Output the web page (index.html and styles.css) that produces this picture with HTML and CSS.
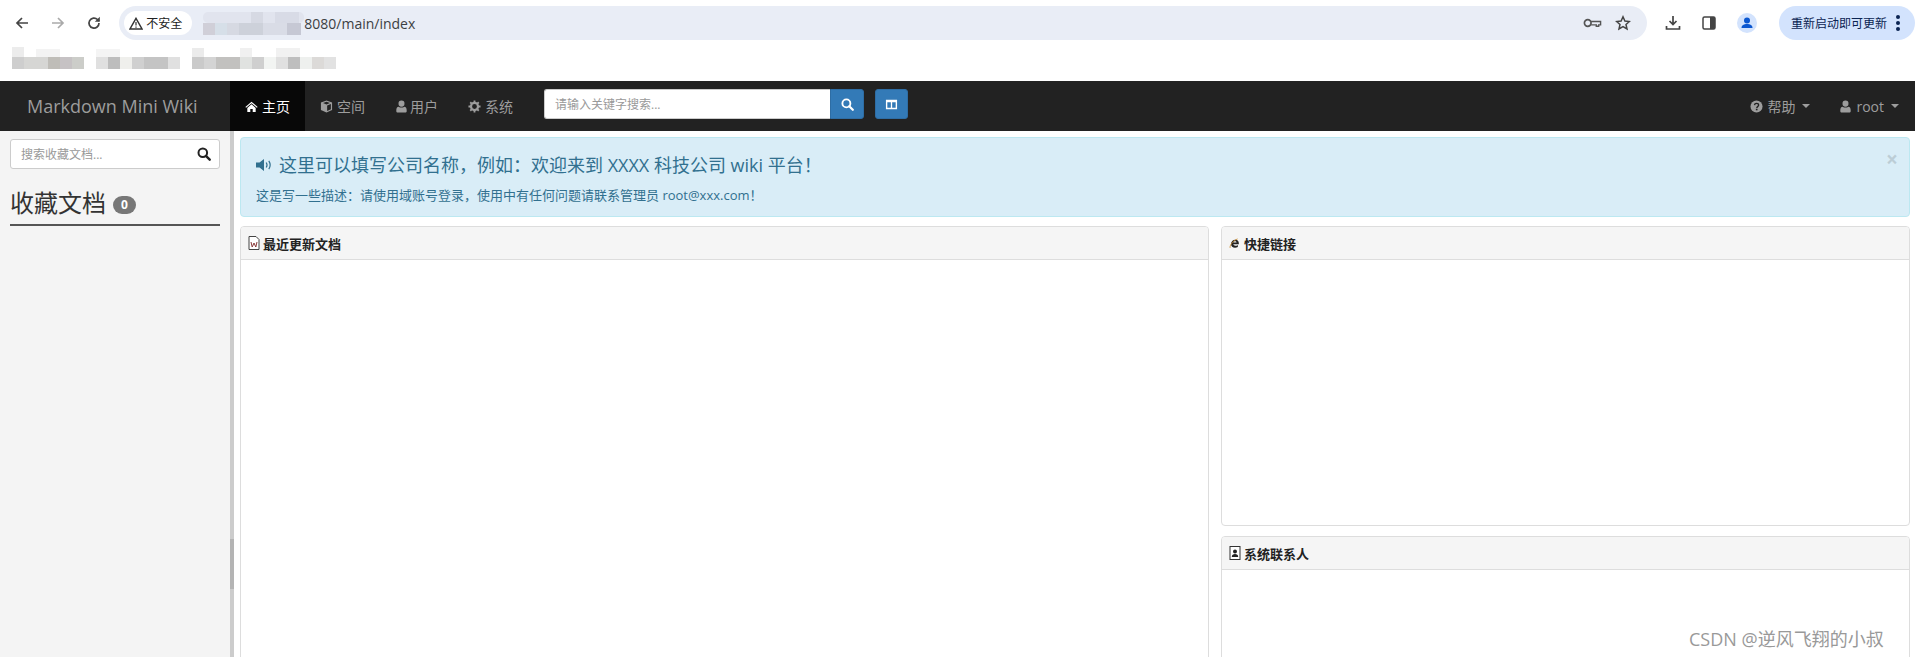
FILE: index.html
```html
<!DOCTYPE html>
<html lang="en">

<head>
  <meta charset="UTF-8">
  <title>Markdown Mini Wiki</title>
  <link rel="stylesheet" href="styles.css">
</head>

<body>
  <svg class="defs" width="0" height="0">
    <symbol id="i-user" viewBox="0 0 12 14">
      <path d="M6 0.5a3.2 3.2 0 0 1 3.2 3.4A3.2 3.2 0 0 1 6 7.3 3.2 3.2 0 0 1 2.8 3.9 3.2 3.2 0 0 1 6 0.5zM3 7.2c.8.6 1.8 1 3 1s2.2-.4 3-1c1.800 .2 2.600 1.500 2.600 4v1c0 .9-.7 1.300-1.500 1.300H1.900C1.100 13.500 .4 13.100 .4 12.200v-1c0-2.500 .8-3.800 2.600-4z" fill="currentColor"/>
    </symbol>
    <symbol id="i-search" viewBox="0 0 14 14">
      <circle cx="5.800" cy="5.800" r="4.300" fill="none" stroke="currentColor" stroke-width="2"/>
      <path d="M8.900 8.900L12.700 12.700" stroke="currentColor" stroke-width="2.400" stroke-linecap="round"/>
    </symbol>
  </svg>

  <header class="browser">
    <div class="toolbar">
      <div class="tool-nav">
        <svg class="tool-icon" viewBox="0 0 16 16"><path d="M14 8H3M8 3L3 8l5 5" fill="none" stroke="#444" stroke-width="1.700"/></svg>
        <svg class="tool-icon" viewBox="0 0 16 16"><path d="M2 8h11M8 3l5 5-5 5" fill="none" stroke="#aaa" stroke-width="1.700"/></svg>
        <svg class="tool-icon" viewBox="0 0 16 16"><path d="M13 8a5 5 0 1 1-1.500-3.500L13 6" fill="none" stroke="#444" stroke-width="1.700"/><path d="M13.800 1.800v5h-5z" fill="#444"/></svg>
      </div>
      <div class="omnibox">
        <div class="chip">
          <svg class="warn" viewBox="0 0 14 13"><path d="M7 1.300L13 12H1z" fill="none" stroke="#333" stroke-width="1.400"/><path d="M7 5v3.600M7 9.500v1.200" stroke="#333" stroke-width="1.200"/></svg>
          <span>不安全</span>
        </div>
        <svg class="mosaic-url" width="101" height="24" viewBox="0 0 101 24">
          <rect x="0" y="1" width="101" height="11" rx="5" fill="#e1e4ee"/>
          <rect x="48" y="1" width="12" height="11" fill="#d6d9e3"/>
          <rect x="72" y="1" width="24" height="11" fill="#d8dbe6"/>
          <rect x="0" y="12" width="12" height="12" fill="#d0cfd8"/>
          <rect x="12" y="12" width="12" height="12" fill="#d6dfe8"/>
          <rect x="24" y="12" width="12" height="12" fill="#d6d9e2"/>
          <rect x="36" y="12" width="24" height="12" fill="#cdd1da"/>
          <rect x="60" y="12" width="24" height="12" fill="#d9dce6"/>
          <rect x="84" y="12" width="14" height="12" fill="#c6c8d4"/>
        </svg>
        <span class="url">8080/main/index</span>
        <div class="omni-end">
          <svg class="omni-icon key" viewBox="0 0 20 12"><circle cx="5" cy="6" r="3.500" fill="none" stroke="#555" stroke-width="1.800"/><path d="M8.500 4.500h10v3.500h-2v1.500h-2.500V8h-5.500" fill="none" stroke="#555" stroke-width="1.500"/></svg>
          <svg class="omni-icon" viewBox="0 0 16 16"><path d="M8 1.800l1.900 4.200 4.500.5-3.400 3 1 4.500L8 11.700 4 14l1-4.500-3.400-3 4.500-.5z" fill="none" stroke="#444" stroke-width="1.500"/></svg>
        </div>
      </div>
      <div class="tool-end">
        <svg class="tool-icon" viewBox="0 0 16 16"><path d="M8 1v8M4.500 6L8 9.500 11.500 6" fill="none" stroke="#444" stroke-width="1.700"/><path d="M1.500 11v3h13v-3" fill="none" stroke="#444" stroke-width="1.700"/></svg>
        <svg class="tool-icon" viewBox="0 0 16 16"><rect x="2" y="2" width="12" height="12" rx="1.500" fill="#fff" stroke="#444" stroke-width="1.500"/><rect x="9" y="2" width="5" height="12" fill="#444"/></svg>
        <svg class="avatar" viewBox="0 0 20 20"><circle cx="10" cy="10" r="10" fill="#d3e3fd"/><circle cx="10" cy="7.500" r="3" fill="#0b57d0"/><path d="M4.500 15c0-3 2.500-4 5.500-4s5.500 1 5.500 4z" fill="#0b57d0"/></svg>
        <div class="restart">
          <span>重新启动即可更新</span>
          <i class="dots"></i>
        </div>
      </div>
    </div>
    <div class="bookmarks">
      <svg width="336" height="22" viewBox="0 0 336 22">
        <rect x="0" y="0" width="12" height="10" fill="#ececec"/>
        <rect x="24" y="2" width="24" height="8" fill="#f3f3f3"/>
        <rect x="84" y="2" width="24" height="8" fill="#f4f4f4"/>
        <rect x="180" y="1" width="12" height="9" fill="#ebebeb"/>
        <rect x="228" y="1" width="12" height="9" fill="#f0f0f0"/>
        <rect x="264" y="1" width="24" height="9" fill="#f1f1f1"/>
        <rect x="0" y="10" width="12" height="12" fill="#cecece"/>
        <rect x="12" y="10" width="24" height="12" fill="#d6d6d4"/>
        <rect x="36" y="10" width="12" height="12" fill="#bfbdb8"/>
        <rect x="48" y="10" width="12" height="12" fill="#c6c2c4"/>
        <rect x="60" y="10" width="12" height="12" fill="#cccdc9"/>
        <rect x="84" y="10" width="12" height="12" fill="#e0e0e0"/>
        <rect x="96" y="10" width="12" height="12" fill="#bdbdbd"/>
        <rect x="108" y="10" width="12" height="12" fill="#efefec"/>
        <rect x="120" y="10" width="12" height="12" fill="#d0d0d0"/>
        <rect x="132" y="10" width="24" height="12" fill="#c4c4c4"/>
        <rect x="156" y="10" width="12" height="12" fill="#e0e0e0"/>
        <rect x="180" y="10" width="12" height="12" fill="#cacaca"/>
        <rect x="192" y="10" width="12" height="12" fill="#d4d4d4"/>
        <rect x="204" y="10" width="24" height="12" fill="#c2c1bf"/>
        <rect x="228" y="10" width="12" height="12" fill="#e0e2e0"/>
        <rect x="240" y="10" width="12" height="12" fill="#cfcfcf"/>
        <rect x="252" y="10" width="12" height="12" fill="#f2f4f2"/>
        <rect x="264" y="10" width="12" height="12" fill="#e0e0e0"/>
        <rect x="276" y="10" width="12" height="12" fill="#bebebe"/>
        <rect x="288" y="10" width="12" height="12" fill="#eef0ee"/>
        <rect x="300" y="10" width="12" height="12" fill="#dcdad8"/>
        <rect x="312" y="10" width="12" height="12" fill="#e2e2e2"/>
      </svg>
    </div>
  </header>

  <nav class="navbar">
    <a class="brand">Markdown Mini Wiki</a>
    <ul class="nav">
      <li class="nav-item active">
        <svg class="nav-icon" viewBox="0 0 14 12"><path d="M7 .8L13.600 6.500l-.8.9L7 2.400 1.200 7.400l-.8-.9zM2.500 7.500L7 3.600l4.500 3.900V12H8.300V8.800H5.700V12H2.500z" fill="currentColor"/></svg>
        <span>主页</span>
      </li>
      <li class="nav-item">
        <svg class="nav-icon" viewBox="0 0 14 14"><path d="M7 .5l6 2.300v8L7 13.500 1 10.800v-8zM7 2L3.300 3.300 7 4.800l3.700-1.500zM7.700 6v5.800l4-1.900V4.400z" fill="currentColor" fill-rule="evenodd"/></svg>
        <span>空间</span>
      </li>
      <li class="nav-item user-item">
        <svg class="nav-icon"><use href="#i-user"/></svg>
        <span>用户</span>
      </li>
      <li class="nav-item">
        <svg class="nav-icon" viewBox="0 0 14 14"><path d="M7 4.600a2.400 2.400 0 1 0 0 4.800 2.400 2.400 0 0 0 0-4.800z" fill="none"/><circle cx="7" cy="7" r="3.800" fill="none" stroke="currentColor" stroke-width="2.400"/><path d="M7 .5v2.500M7 11v2.500M.5 7H3M11 7h2.500M2.400 2.400l1.800 1.800M9.800 9.800l1.800 1.800M2.400 11.600l1.800-1.800M9.800 4.200l1.800-1.800" stroke="currentColor" stroke-width="2"/></svg>
        <span>系统</span>
      </li>
    </ul>
    <form class="nav-search">
      <input class="nav-input" type="text" placeholder="请输入关键字搜索...">
      <button class="btn btn-search" type="button"><svg class="btn-icon"><use href="#i-search"/></svg></button>
    </form>
    <button class="btn btn-columns" type="button">
      <svg class="btn-icon" viewBox="0 0 14 14"><path d="M1 2h12v10H1zM2.500 4.500V10.500H6.300V4.500zM7.700 4.500V10.500H11.500V4.500z" fill="currentColor" fill-rule="evenodd"/></svg>
    </button>
    <ul class="nav nav-right">
      <li class="nav-item">
        <svg class="nav-icon" viewBox="0 0 14 14"><circle cx="7" cy="7" r="6.500" fill="currentColor"/><path d="M4.800 5.400C5 4.200 5.900 3.600 7 3.600c1.300 0 2.300.8 2.300 1.900 0 1.700-2 1.500-2 3" fill="none" stroke="#222" stroke-width="1.500"/><rect x="6.300" y="9.400" width="1.800" height="1.700" fill="#222"/></svg>
        <span>帮助</span>
        <i class="caret"></i>
      </li>
      <li class="nav-item">
        <svg class="nav-icon"><use href="#i-user"/></svg>
        <span>root</span>
        <i class="caret"></i>
      </li>
    </ul>
  </nav>

  <div class="app">
    <aside class="sidebar">
      <div class="side-search">
        <input class="side-input" type="text" placeholder="搜索收藏文档...">
        <svg class="side-search-icon"><use href="#i-search"/></svg>
      </div>
      <h2 class="side-title">收藏文档 <span class="badge">0</span></h2>
    </aside>
    <div class="splitter"><div class="splitter-handle"></div></div>

    <main class="content">
      <div class="alert">
        <span class="alert-close">×</span>
        <h4 class="alert-title">
          <svg class="alert-icon" viewBox="0 0 18 14"><path d="M0 4.500h3.500L8 1v12L3.500 9.500H0z" fill="currentColor"/><path d="M10.200 4.500c1 1.500 1 3.500 0 5M12.800 2.800c1.700 2.600 1.700 5.800 0 8.400" fill="none" stroke="currentColor" stroke-width="1.200"/></svg>
          这里可以填写公司名称，例如：欢迎来到 XXXX 科技公司 wiki 平台！
        </h4>
        <p class="alert-text">这是写一些描述：请使用域账号登录，使用中有任何问题请联系管理员 root@xxx.com！</p>
      </div>

      <div class="panels">
        <section class="panel panel-recent">
          <div class="panel-head">
            <svg class="panel-icon" viewBox="0 0 12 14"><path d="M1 .5h7l3 3v10H1z" fill="#fff" stroke="#444"/><path d="M3 6l1.200 5L6 7l1.800 4L9 6" fill="none" stroke="#8a3a3a" stroke-width="1"/></svg>
            最近更新文档
          </div>
        </section>
        <div class="panel-col">
          <section class="panel panel-links">
            <div class="panel-head">
              <svg class="panel-icon" viewBox="0 0 14 14"><path d="M11.500 8.600H5c.2 1.700 2.800 2.400 5.300.7v2.400c-3.800 1.700-8 .4-8-3.500 0-3.300 3-5.700 6-5 2.300.5 3.500 2.600 3.200 5.400zM5 6.400h3.800C8.700 4.400 5.400 4.300 5 6.400z" fill="#222" fill-rule="evenodd"/><path d="M1.500 12.800C.3 11.500 3 5 10 2.200" fill="none" stroke="#c98a2e" stroke-width="1"/></svg>
              快捷链接
            </div>
          </section>
          <section class="panel panel-contact">
            <div class="panel-head">
              <svg class="panel-icon" viewBox="0 0 12 14"><rect x="1" y=".5" width="10" height="13" fill="#fff" stroke="#333"/><circle cx="6" cy="5.500" r="2" fill="#222"/><path d="M2.800 11c0-2.200 1.400-3 3.200-3s3.200.8 3.200 3z" fill="#222"/></svg>
              系统联系人
            </div>
          </section>
        </div>
      </div>
    </main>
  </div>

  <div class="watermark">CSDN @逆风飞翔的小叔</div>
</body>

</html>
```

FILE: styles.css
```css
html {
  font-family: "Open Sans", "Noto Sans CJK SC", sans-serif;
}

* {
  box-sizing: border-box;
}

body {
  width: 1915px;
  height: 657px;
  margin: 0;
  overflow: hidden;
  position: relative;
  background-color: #fff;
  color: #333;
  font-size: 14px;
}

.defs {
  position: absolute;
}

/* browser bar */
.browser {
  height: 81px;
  background-color: #fff;
}

.toolbar {
  height: 46px;
  padding-top: 6px;
  display: flex;
  align-items: flex-start;
}

.tool-nav {
  width: 120px;
  height: 34px;
  padding-left: 14px;
  display: flex;
  align-items: center;
  gap: 20px;
}

.tool-icon {
  width: 16px;
  height: 16px;
}

.omnibox {
  width: 1538px;
  height: 34px;
  padding-left: 5px;
  display: flex;
  align-items: center;
  background-color: #e9edf6;
  border-radius: 17px;
}

.chip {
  width: 68px;
  height: 24px;
  display: flex;
  align-items: center;
  gap: 3px;
  padding-left: 5px;
  background-color: #fff;
  border-radius: 12px;
  font-size: 12px;
  color: #222;
}

.warn {
  width: 14px;
  height: 13px;
}

.mosaic-url {
  margin-left: 11px;
}

.url {
  font-size: 14px;
  color: #3c4043;
}

.omni-end {
  margin-left: auto;
  padding-right: 16px;
  display: flex;
  align-items: center;
  gap: 13px;
}

.omni-icon {
  width: 16px;
  height: 16px;
}

.key {
  width: 19px;
  height: 12px;
}

.tool-end {
  flex: 1;
  height: 34px;
  padding-left: 18px;
  display: flex;
  align-items: center;
  gap: 20px;
}

.avatar {
  width: 20px;
  height: 20px;
}

.restart {
  width: 136px;
  height: 34px;
  margin-left: 2px;
  padding-left: 12px;
  display: flex;
  align-items: center;
  background-color: #d3e3fd;
  border-radius: 17px;
  font-size: 12px;
  color: #0b2452;
}

.dots {
  width: 4px;
  height: 4px;
  margin-left: 9px;
  border-radius: 50%;
  background-color: #0b2452;
  box-shadow: 0 -6px 0 #0b2452, 0 6px 0 #0b2452;
}

.bookmarks {
  height: 35px;
  padding-left: 12px;
  padding-top: 1px;
}

/* top navbar */
.navbar {
  height: 50px;
  display: flex;
  align-items: stretch;
  background-color: #222;
  color: #9d9d9d;
}

.brand {
  width: 230px;
  padding-left: 27px;
  line-height: 50px;
  font-size: 18px;
  color: #9d9d9d;
}

.nav {
  display: flex;
  margin: 0;
  padding: 0;
  list-style: none;
}

.nav-item {
  display: flex;
  align-items: center;
  gap: 4px;
  padding: 0 15px;
  font-size: 14px;
}

.nav-item.active {
  background-color: #080808;
  color: #fff;
}

.nav-icon {
  width: 13px;
  height: 13px;
}

.user-item {
  gap: 2px;
}

.nav-search {
  display: flex;
  margin: 8px 0 0 16px;
  height: 30px;
}

.nav-input {
  width: 286px;
  height: 30px;
  padding: 0 10px;
  border: 1px solid #ccc;
  border-right: 0;
  border-radius: 3px 0 0 3px;
  font: 12px "Open Sans", "Noto Sans CJK SC", sans-serif;
  outline: 0;
}

.nav-input::placeholder,
.side-input::placeholder {
  color: #999;
}

.btn {
  height: 30px;
  padding: 0;
  display: flex;
  align-items: center;
  justify-content: center;
  border: 1px solid #2e6da4;
  background-color: #337ab7;
  color: #fff;
}

.btn-search {
  width: 34px;
  border-radius: 0 3px 3px 0;
}

.btn-columns {
  width: 33px;
  margin: 8px 0 0 11px;
  border-radius: 3px;
}

.btn-icon {
  width: 13px;
  height: 13px;
}

.nav-right {
  margin-left: auto;
  padding-right: 1px;
}

.nav-right .nav-item {
  padding: 0 15px 0 14px;
}

.caret {
  width: 0;
  height: 0;
  margin-left: 3px;
  border-top: 4px solid currentColor;
  border-left: 4px solid transparent;
  border-right: 4px solid transparent;
}

/* page body */
.app {
  height: 526px;
  display: flex;
}

.sidebar {
  width: 230px;
  padding: 8px 10px 0;
  background-color: #f4f4f4;
}

.side-search {
  position: relative;
  height: 30px;
}

.side-input {
  width: 100%;
  height: 30px;
  padding: 0 30px 0 10px;
  border: 1px solid #ccc;
  border-radius: 3px;
  font: 12px "Open Sans", "Noto Sans CJK SC", sans-serif;
  outline: 0;
}

.side-search-icon {
  position: absolute;
  right: 9px;
  top: 8px;
  width: 14px;
  height: 14px;
  color: #222;
}

.side-title {
  margin: 17px 0 0;
  height: 40px;
  display: flex;
  align-items: center;
  gap: 7px;
  padding-bottom: 5px;
  border-bottom: 2px solid #555;
  font-size: 24px;
  font-weight: 400;
  line-height: 30px;
}

.badge {
  width: 23px;
  height: 18px;
  margin-top: 4px;
  border-radius: 9px;
  background-color: #777;
  color: #fff;
  font-size: 12px;
  font-weight: 700;
  line-height: 18px;
  text-align: center;
}

.splitter {
  width: 4px;
  padding-top: 408px;
  background-color: #ccc;
}

.splitter-handle {
  height: 50px;
  background-color: #b4b4b4;
}

.content {
  flex: 1;
  padding: 6px 5px 0 6px;
}

.alert {
  position: relative;
  height: 80px;
  padding: 14px 15px 0;
  background-color: #d9edf7;
  border: 1px solid #bce8f1;
  border-radius: 4px;
  color: #31708f;
}

.alert-close {
  position: absolute;
  right: 11px;
  top: 9px;
  font-size: 21px;
  font-weight: 700;
  line-height: 24px;
  color: #000;
  opacity: 0.13;
}

.alert-title {
  margin: 0;
  display: flex;
  align-items: center;
  gap: 5px;
  font-size: 18px;
  font-weight: 400;
  line-height: 26px;
}

.alert-icon {
  width: 18px;
  height: 14px;
}

.alert-text {
  margin: 8px 0 0;
  font-size: 13px;
  line-height: 18px;
}

.panels {
  margin-top: 9px;
  display: flex;
  gap: 12px;
}

.panel-col {
  width: 689px;
  display: flex;
  flex-direction: column;
  gap: 10px;
}

.panel {
  background-color: #fff;
  border: 1px solid #ddd;
  border-radius: 4px;
}

.panel-recent {
  width: 969px;
  height: 600px;
}

.panel-links {
  height: 300px;
}

.panel-contact {
  height: 300px;
}

.panel-head {
  height: 33px;
  padding-left: 7px;
  display: flex;
  align-items: center;
  gap: 3px;
  background-color: #f5f5f5;
  border-bottom: 1px solid #ddd;
  border-radius: 3px 3px 0 0;
  font-size: 13px;
  font-weight: 700;
  color: #222;
}

.panel-icon {
  width: 12px;
  height: 14px;
}

.watermark {
  position: absolute;
  left: 1689px;
  top: 627px;
  font-size: 18px;
  line-height: 24px;
  color: #999;
  white-space: nowrap;
  text-shadow: 0 0 1px #fff;
}
```
